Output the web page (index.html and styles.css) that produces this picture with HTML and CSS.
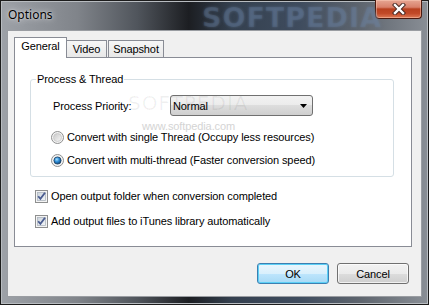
FILE: index.html
```html
<!DOCTYPE html>
<html lang="en">
<head>
    <meta charset="UTF-8">
    <title>Options</title>
    <link rel="stylesheet" href="styles.css">
</head>
<body>
    <div class="window">
        <div class="titlebar">
            <span class="title">Options</span>
            <span class="title-mark">SOFTPEDIA</span>
            <div class="close-btn">
                <svg width="14" height="12" viewBox="0 0 14 12">
                    <path d="M3 2 L11 10 M11 2 L3 10" stroke="#4a2a24" stroke-width="4.4" stroke-linecap="square"/>
                    <path d="M3 2 L11 10 M11 2 L3 10" stroke="#ffffff" stroke-width="2.4" stroke-linecap="square"/>
                </svg>
            </div>
        </div>

        <div class="client">
            <div class="tabs">
                <div class="tab tab-active">General</div>
                <div class="tab tab-video">Video</div>
                <div class="tab tab-snap">Snapshot</div>
            </div>

            <div class="tab-panel">
                <span class="mark-big">SOFTPEDIA</span>
                <span class="mark-url">www.softpedia.com</span>

                <fieldset class="group">
                    <legend>Process &amp; Thread</legend>
                    <div class="priority-row">
                        <span class="priority-label">Process Priority:</span>
                        <div class="select">
                            <span class="select-value">Normal</span>
                            <svg width="7" height="4" viewBox="0 0 7 4"><path d="M0 0 H7 L3.5 4 Z" fill="#000"/></svg>
                        </div>
                    </div>
                    <div class="option radio-first">
                        <svg width="13" height="13" viewBox="0 0 13 13">
                            <defs>
                                <linearGradient id="ro1" x1="0" y1="0" x2="1" y2="1">
                                    <stop offset="0" stop-color="#c9c9c9"/>
                                    <stop offset="1" stop-color="#f7f7f7"/>
                                </linearGradient>
                            </defs>
                            <circle cx="6.5" cy="6.5" r="6" fill="#f3f3f3" stroke="#8e8f8f"/>
                            <circle cx="6.5" cy="6.5" r="4" fill="url(#ro1)" stroke="#c6c6c6" stroke-width="0.8"/>
                        </svg>
                        <span>Convert with single Thread (Occupy less resources)</span>
                    </div>
                    <div class="option radio-second">
                        <svg width="13" height="13" viewBox="0 0 13 13">
                            <defs>
                                <radialGradient id="ro2" cx="0.4" cy="0.35" r="0.7">
                                    <stop offset="0" stop-color="#a8e0ff"/>
                                    <stop offset="0.45" stop-color="#2f8fd8"/>
                                    <stop offset="1" stop-color="#0b3f72"/>
                                </radialGradient>
                            </defs>
                            <circle cx="6.5" cy="6.5" r="6" fill="#f3f3f3" stroke="#8e8f8f"/>
                            <circle cx="6.5" cy="6.5" r="3.6" fill="url(#ro2)" stroke="#1c3d60" stroke-width="0.8"/>
                        </svg>
                        <span>Convert with multi-thread (Faster conversion speed)</span>
                    </div>
                </fieldset>

                <div class="option check-first">
                    <svg width="13" height="13" viewBox="0 0 13 13">
                        <defs>
                            <linearGradient id="ck1" x1="0" y1="0" x2="1" y2="1">
                                <stop offset="0" stop-color="#cbd3dc"/>
                                <stop offset="1" stop-color="#f4f6f8"/>
                            </linearGradient>
                        </defs>
                        <rect x="0.5" y="0.5" width="12" height="12" fill="#f4f4f4" stroke="#8e8f8f"/>
                        <rect x="2.5" y="2.5" width="8" height="8" fill="url(#ck1)" stroke="#aeb6bf" stroke-width="0.8"/>
                        <path d="M3.2 6.2 L5.4 8.9 L10 2.8" fill="none" stroke="#4a5c90" stroke-width="1.8"/>
                    </svg>
                    <span>Open output folder when conversion completed</span>
                </div>
                <div class="option check-second">
                    <svg width="13" height="13" viewBox="0 0 13 13">
                        <defs>
                            <linearGradient id="ck2" x1="0" y1="0" x2="1" y2="1">
                                <stop offset="0" stop-color="#cbd3dc"/>
                                <stop offset="1" stop-color="#f4f6f8"/>
                            </linearGradient>
                        </defs>
                        <rect x="0.5" y="0.5" width="12" height="12" fill="#f4f4f4" stroke="#8e8f8f"/>
                        <rect x="2.5" y="2.5" width="8" height="8" fill="url(#ck2)" stroke="#aeb6bf" stroke-width="0.8"/>
                        <path d="M3.2 6.2 L5.4 8.9 L10 2.8" fill="none" stroke="#4a5c90" stroke-width="1.8"/>
                    </svg>
                    <span>Add output files to iTunes library automatically</span>
                </div>
            </div>

            <div class="buttons">
                <div class="btn btn-default">OK</div>
                <div class="btn">Cancel</div>
            </div>
        </div>
    </div>
</body>
</html>
```

FILE: styles.css
```css
body {
    margin: 0;
    background-color: #2a2d31;
    font-family: "Liberation Sans", Arial, sans-serif;
    font-size: 11px;
    letter-spacing: -0.1px;
    color: #000;
}
.window {
    width: 429px;
    height: 305px;
    box-sizing: border-box;
    padding: 0 7px 8px 7px;
    display: flex;
    flex-direction: column;
    background: linear-gradient(90deg, #9ea2a8 0%, #80848a 18%, #50555c 32%, #1c1e22 44%, #34404f 54%, #3f4c5e 70%, #5e656e 84%, #8a8f96 100%);
    box-shadow: inset 0 0 0 1px #1c1c1c, inset 0 0 0 2px #b8bcc0;
}
/* Title bar */
.titlebar {
    height: 30px;
    flex-shrink: 0;
    display: flex;
    align-items: flex-start;
    position: relative;
}
.title {
    margin: 7px 0 0 1px;
    font-family: "Noto Sans", "Open Sans", sans-serif;
    font-size: 12px;
    line-height: 16px;
    letter-spacing: 0;
    text-shadow: 0 0 6px rgba(255, 255, 255, 0.8), 0 0 2px rgba(255, 255, 255, 0.6);
}
.title-mark {
    position: absolute;
    left: 195px;
    top: 2px;
    font-family: "DejaVu Sans", sans-serif;
    font-weight: bold;
    font-size: 27px;
    letter-spacing: 1px;
    color: rgba(110, 135, 170, 0.22);
    text-shadow: 0 0 3px rgba(110, 135, 170, 0.4);
    pointer-events: none;
}
.close-btn {
    margin-left: auto;
    width: 47px;
    height: 19px;
    box-sizing: border-box;
    border: 1px solid #4b1a0f;
    border-top: none;
    border-radius: 0 0 4px 4px;
    background: linear-gradient(#e6a693 0%, #d8806a 40%, #b8401f 50%, #c24a28 75%, #de7a56 100%);
    box-shadow: inset 0 0 0 1px rgba(255, 210, 190, 0.45);
    display: flex;
    align-items: center;
    justify-content: center;
}
/* Client area */
.client {
    flex: 1;
    background-color: #f0f0f0;
    border: 1px solid #9a9da2;
    display: flex;
    flex-direction: column;
}
.tabs {
    display: flex;
    align-items: flex-end;
    margin: 6px 0 -1px 6px;
    position: relative;
    z-index: 1;
}
.tab {
    box-sizing: border-box;
    height: 18px;
    padding-top: 2px;
    line-height: 13px;
    text-align: center;
    border: 1px solid #898c95;
    background: linear-gradient(#f6f6f6, #e8e8e8);
}
.tab-active {
    width: 53px;
    height: 21px;
    border-bottom: none;
    background: #fff;
}
.tab-video {
    width: 40px;
    border-left: none;
}
.tab-snap {
    width: 56px;
    margin-left: 1px;
}
.tab-panel {
    position: relative;
    margin: 0 9px 0 6px;
    height: 190px;
    box-sizing: border-box;
    border: 1px solid #898c95;
    background: #fff;
}
.mark-big {
    position: absolute;
    left: 113px;
    top: 33px;
    font-family: "DejaVu Sans", sans-serif;
    font-size: 20px;
    letter-spacing: 1px;
    color: rgba(0, 0, 0, 0.06);
    pointer-events: none;
}
.mark-url {
    position: absolute;
    left: 127px;
    top: 62px;
    font-size: 11px;
    color: #d4d4d4;
    pointer-events: none;
}
/* Group box */
.group {
    margin: 15px 0 0 15px;
    padding: 0 0 8px 20px;
    width: 364px;
    box-sizing: border-box;
    border: 1px solid #d5dfe5;
    border-radius: 3px;
}
.group legend {
    margin-left: -15px;
    padding: 0 1px;
    line-height: 13px;
}
.priority-row {
    display: flex;
    align-items: center;
    margin: 9px 0 0 2px;
}
.priority-label {
    width: 117px;
}
.select {
    width: 143px;
    height: 21px;
    box-sizing: border-box;
    border: 1px solid #707070;
    border-radius: 3px;
    background: linear-gradient(#f2f2f2 0%, #ebebeb 50%, #dddddd 50%, #cfcfcf 100%);
    display: flex;
    align-items: center;
    justify-content: space-between;
    padding: 0 5px 0 2px;
}
.option {
    display: flex;
    align-items: center;
    gap: 3px;
    height: 16px;
}
.radio-first {
    margin-top: 13px;
}
.radio-second {
    margin-top: 7px;
}
.check-first {
    margin: 11px 0 0 20px;
}
.check-second {
    margin: 9px 0 0 20px;
}
/* Dialog buttons */
.buttons {
    display: flex;
    justify-content: flex-end;
    gap: 8px;
    margin-top: 16px;
    padding-right: 12px;
}
.btn {
    width: 72px;
    height: 21px;
    box-sizing: border-box;
    border: 1px solid #707070;
    border-radius: 3px;
    background: linear-gradient(#f2f2f2 0%, #ebebeb 50%, #dddddd 50%, #cfcfcf 100%);
    box-shadow: inset 0 0 0 1px rgba(255, 255, 255, 0.7);
    display: flex;
    align-items: center;
    justify-content: center;
}
.btn-default {
    border-color: #3c7fb1;
    background: linear-gradient(#eaf6fd 0%, #d9f0fc 50%, #bee6fd 50%, #a7d9f5 100%);
    box-shadow: inset 0 0 0 1px #5cd0f6;
}
```
